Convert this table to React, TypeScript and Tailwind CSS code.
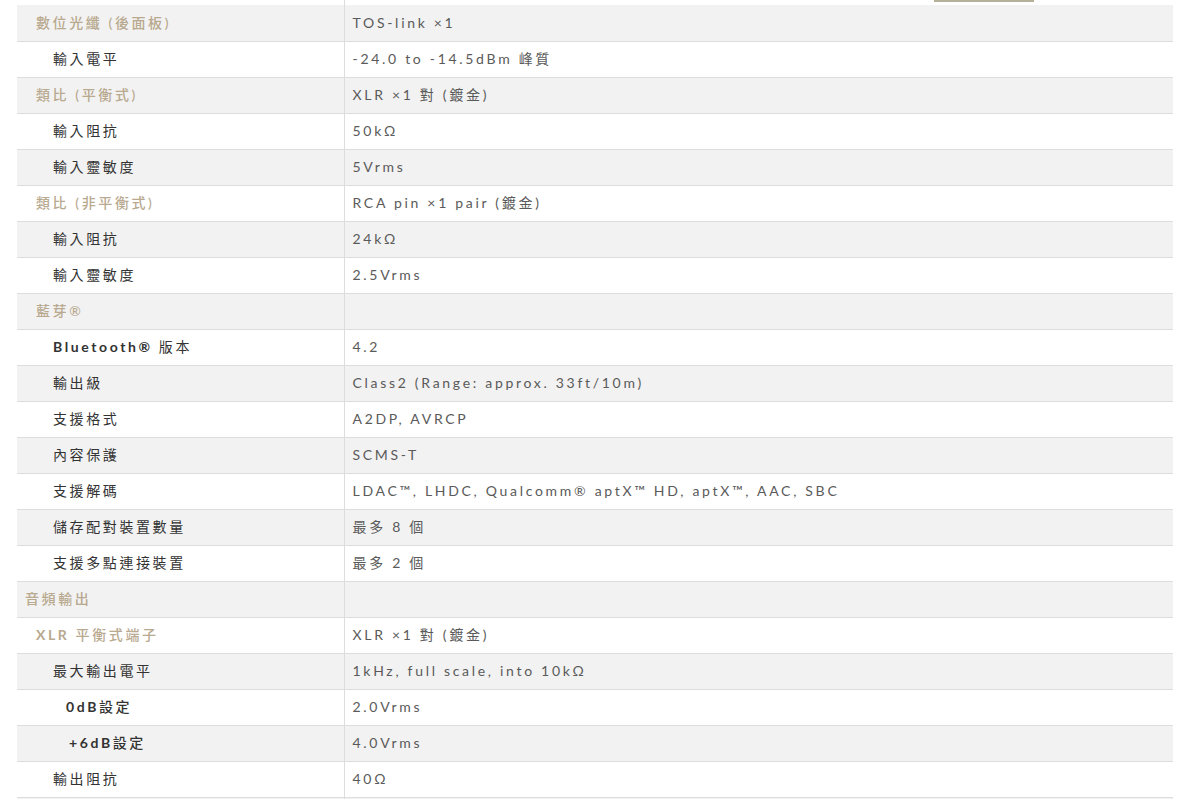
import type { ReactNode } from "react";

type Row = {
  label: ReactNode;
  value: string;
  kind: "head" | "sub" | "section" | "subhead" | "deep" | "deep2";
};

const rows: Row[] = [
  { label: "數位光纖 (後面板)", value: "TOS-link ×1", kind: "head" },
  { label: "輸入電平", value: "-24.0 to -14.5dBm 峰質", kind: "sub" },
  { label: "類比 (平衡式)", value: "XLR ×1 對 (鍍金)", kind: "head" },
  { label: "輸入阻抗", value: "50kΩ", kind: "sub" },
  { label: "輸入靈敏度", value: "5Vrms", kind: "sub" },
  { label: "類比 (非平衡式)", value: "RCA pin ×1 pair (鍍金)", kind: "head" },
  { label: "輸入阻抗", value: "24kΩ", kind: "sub" },
  { label: "輸入靈敏度", value: "2.5Vrms", kind: "sub" },
  { label: "藍芽®", value: "", kind: "head" },
  { label: <><b className="font-bold">Bluetooth®</b> 版本</>, value: "4.2", kind: "sub" },
  { label: "輸出級", value: "Class2 (Range: approx. 33ft/10m)", kind: "sub" },
  { label: "支援格式", value: "A2DP, AVRCP", kind: "sub" },
  { label: "內容保護", value: "SCMS-T", kind: "sub" },
  { label: "支援解碼", value: "LDAC™, LHDC, Qualcomm® aptX™ HD, aptX™, AAC, SBC", kind: "sub" },
  { label: "儲存配對裝置數量", value: "最多 8 個", kind: "sub" },
  { label: "支援多點連接裝置", value: "最多 2 個", kind: "sub" },
  { label: "音頻輸出", value: "", kind: "section" },
  { label: <><b className="font-bold">XLR</b> 平衡式端子</>, value: "XLR ×1 對 (鍍金)", kind: "subhead" },
  { label: "最大輸出電平", value: "1kHz, full scale, into 10kΩ", kind: "sub" },
  { label: <><b className="font-bold">0dB</b>設定</>, value: "2.0Vrms", kind: "deep" },
  { label: <><b className="font-bold">+6dB</b>設定</>, value: "4.0Vrms", kind: "deep2" },
  { label: "輸出阻抗", value: "40Ω", kind: "sub" },
];

const labelClass: Record<Row["kind"], string> = {
  head: "pl-[19px] text-[#b8a98f] font-medium",
  section: "pl-[8px] text-[#b8a98f] font-medium",
  subhead: "pl-[19px] text-[#b8a98f] font-medium",
  sub: "pl-[36px] text-[#333] font-normal",
  deep: "pl-[49px] text-[#333] font-medium",
  deep2: "pl-[52px] text-[#333] font-medium",
};

export default function App() {
  return (
    <div
      className="min-h-screen bg-white px-[17px] pr-[19px]"
      style={{ fontFamily: '"Lato", "Noto Sans CJK TC", sans-serif' }}
    >
      <table className="w-full table-fixed border-collapse text-[14px]">
        <colgroup>
          <col className="w-[327px]" />
          <col />
        </colgroup>
        <tbody>
          <tr className="h-[5px]">
            <td className="p-0 border-r border-[#ddd]" />
            <td className="p-0 align-top">
              <div className="ml-[589px] h-[2px] w-[100px] bg-[#b5b09a]" />
            </td>
          </tr>
          {rows.map((r, i) => (
            <tr
              key={i}
              className={`h-[36px] border-b border-[#dddddd] ${i % 2 === 0 ? "bg-[#f2f2f2]" : "bg-white"}`}
            >
              <td className={`p-0 pb-[1px] border-r border-[#dddddd] tracking-[2.6px] whitespace-nowrap ${labelClass[r.kind]}`}>
                {r.label}
              </td>
              <td className="p-0 pb-[1px] pl-[8px] text-[#5a5a5a] tracking-[2.7px] whitespace-nowrap">
                {r.value}
              </td>
            </tr>
          ))}
          <tr className="h-[20px] bg-[#f2f2f2]">
            <td className="p-0 border-r border-[#dddddd]" />
            <td className="p-0" />
          </tr>
        </tbody>
      </table>
    </div>
  );
}
